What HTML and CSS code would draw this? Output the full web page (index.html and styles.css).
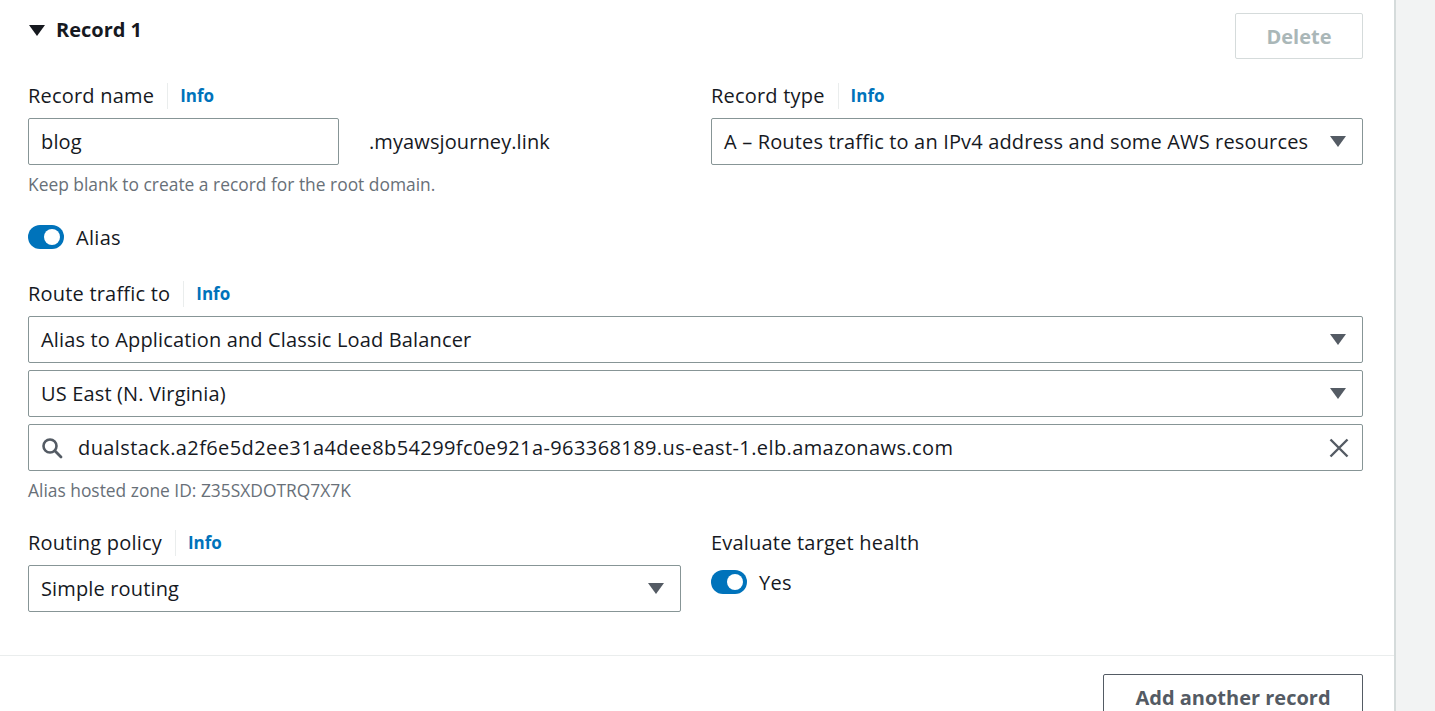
FILE: index.html
```html
<!DOCTYPE html>
<html>
<head>
<meta charset="utf-8">
<link rel="stylesheet" href="styles.css">
</head>
<body>
<div class="page">
  <div class="panel">
    <div class="record">
      <div class="header">
        <h2 class="title"><span class="caret-down"></span>Record 1</h2>
        <button class="btn btn-disabled">Delete</button>
      </div>

      <div class="grid2 row-first">
        <div class="field">
          <div class="label">Record name<span class="sep"></span><a class="info">Info</a></div>
          <div class="name-row">
            <div class="input name-input">blog</div>
            <span class="suffix">.myawsjourney.link</span>
          </div>
          <div class="hint">Keep blank to create a record for the root domain.</div>
        </div>
        <div class="field">
          <div class="label">Record type<span class="sep"></span><a class="info">Info</a></div>
          <div class="input select">A – Routes traffic to an IPv4 address and some AWS resources<span class="tri"></span></div>
        </div>
      </div>

      <div class="toggle-row alias-row">
        <span class="toggle"><span class="knob"></span></span>
        <span class="toggle-text">Alias</span>
      </div>

      <div class="field route">
        <div class="label">Route traffic to<span class="sep"></span><a class="info">Info</a></div>
        <div class="stack">
          <div class="input select">Alias to Application and Classic Load Balancer<span class="tri"></span></div>
          <div class="input select">US East (N. Virginia)<span class="tri"></span></div>
          <div class="input search">
            <svg class="search-ic" width="22" height="22" viewBox="0 0 22 22"><circle cx="9" cy="9" r="6.5" fill="none" stroke="#545b64" stroke-width="2.6"/><line x1="13.8" y1="13.8" x2="20" y2="20" stroke="#545b64" stroke-width="2.8" stroke-linecap="round"/></svg>
            <span class="search-text">dualstack.a2f6e5d2ee31a4dee8b54299fc0e921a-963368189.us-east-1.elb.amazonaws.com</span>
            <svg class="clear-ic" width="20" height="20" viewBox="0 0 20 20"><path d="M1.5 1.5 L18.5 18.5 M18.5 1.5 L1.5 18.5" stroke="#545b64" stroke-width="2.4" fill="none"/></svg>
          </div>
        </div>
        <div class="hint">Alias hosted zone ID: Z35SXDOTRQ7X7K</div>
      </div>

      <div class="grid2 row-policy">
        <div class="field">
          <div class="label">Routing policy<span class="sep"></span><a class="info">Info</a></div>
          <div class="input select">Simple routing<span class="tri"></span></div>
        </div>
        <div class="field">
          <div class="label">Evaluate target health</div>
          <div class="toggle-row yes-row">
            <span class="toggle"><span class="knob"></span></span>
            <span class="toggle-text">Yes</span>
          </div>
        </div>
      </div>
    </div>
    <div class="footer">
      <button class="btn btn-normal">Add another record</button>
    </div>
  </div>
  <div class="side"></div>
</div>
</body>
</html>
```

FILE: styles.css
```css
* { box-sizing: border-box; }
html, body { margin: 0; padding: 0; }
body {
  font-family: "Open Sans", "Noto Sans", sans-serif;
  color: #16191f;
  background: #fff;
  width: 1435px;
  height: 711px;
  overflow: hidden;
}
.page {
  display: flex;
  height: 711px;
}
.panel {
  flex: 0 0 1394px;
  border-right: 2px solid #d5dbdb;
  background: #fff;
}
.side {
  flex: 1;
  background: #f2f3f3;
}
.record {
  padding: 14px 31px 43px 28px;
  border-bottom: 1px solid #eaeded;
}
.header {
  display: flex;
  justify-content: space-between;
  align-items: flex-start;
}
.title {
  margin: 0;
  font-size: 20px;
  font-weight: 700;
  line-height: 32px;
  display: flex;
  align-items: center;
}
.caret-down {
  display: inline-block;
  width: 0;
  height: 0;
  border-left: 8px solid transparent;
  border-right: 8px solid transparent;
  border-top: 11px solid #16191f;
  margin: 0 11px 0 1px;
}
.btn {
  font-family: inherit;
  font-size: 20px;
  font-weight: 700;
  background: #fff;
  border-radius: 2px;
  height: 46px;
  padding: 0 20px;
}
.btn-disabled {
  width: 128px;
  color: #aab7b8;
  border: 1px solid #d5dbdb;
  margin-top: -1px;
}
.btn-normal {
  width: 260px;
  color: #545b64;
  border: 1px solid #545b64;
}
.grid2 {
  display: grid;
  grid-template-columns: 653px 652px;
  column-gap: 30px;
}
.row-first { margin-top: 23px; }
.label {
  display: flex;
  align-items: center;
  font-size: 20px;
  letter-spacing: 0.2px;
  line-height: 28px;
  height: 28px;
  margin-bottom: 8px;
}
.sep {
  display: inline-block;
  width: 1px;
  height: 26px;
  background: #eaeded;
  margin: 0 12px 0 13px;
}
.info {
  font-size: 17px;
  font-weight: 700;
  letter-spacing: 0;
  color: #0073bb;
}
.input {
  height: 47px;
  border: 1px solid #879596;
  border-radius: 2px;
  font-size: 20px;
  letter-spacing: 0.15px;
  display: flex;
  align-items: center;
  padding: 0 12px;
  background: #fff;
}
.name-row {
  display: flex;
  align-items: center;
}
.name-input { width: 311px; }
.suffix {
  font-size: 20px;
  letter-spacing: 0.1px;
  margin-left: 30px;
}
.select {
  justify-content: space-between;
}
.tri {
  display: inline-block;
  width: 0;
  height: 0;
  border-left: 8px solid transparent;
  border-right: 8px solid transparent;
  border-top: 11px solid #545b64;
  margin-right: 4px;
}
.hint {
  font-size: 17.4px;
  line-height: 22px;
  color: #687078;
  margin-top: 8px;
}
.toggle-row {
  display: flex;
  align-items: center;
  height: 24px;
}
.alias-row { margin-top: 30px; }
.toggle {
  width: 36px;
  height: 24px;
  border-radius: 12px;
  background: #0073bb;
  position: relative;
  flex: none;
}
.knob {
  position: absolute;
  right: 4px;
  top: 4px;
  width: 16px;
  height: 16px;
  border-radius: 50%;
  background: #fff;
}
.toggle-text {
  font-size: 20px;
  letter-spacing: 0.3px;
  margin-left: 12px;
}
.route { margin-top: 31px; }
.stack {
  display: flex;
  flex-direction: column;
  gap: 7px;
}
.search {
  padding: 0 12px 0 12px;
}
.search-ic { flex: none; }
.search-text {
  flex: 1;
  margin-left: 15px;
  letter-spacing: 0.4px;
}
.clear-ic { flex: none; margin-right: 1px; }
.row-policy { margin-top: 28px; }
.yes-row { margin-top: 13px; }
.footer {
  display: flex;
  justify-content: flex-end;
  padding: 18px 31px 0 0;
}
```
